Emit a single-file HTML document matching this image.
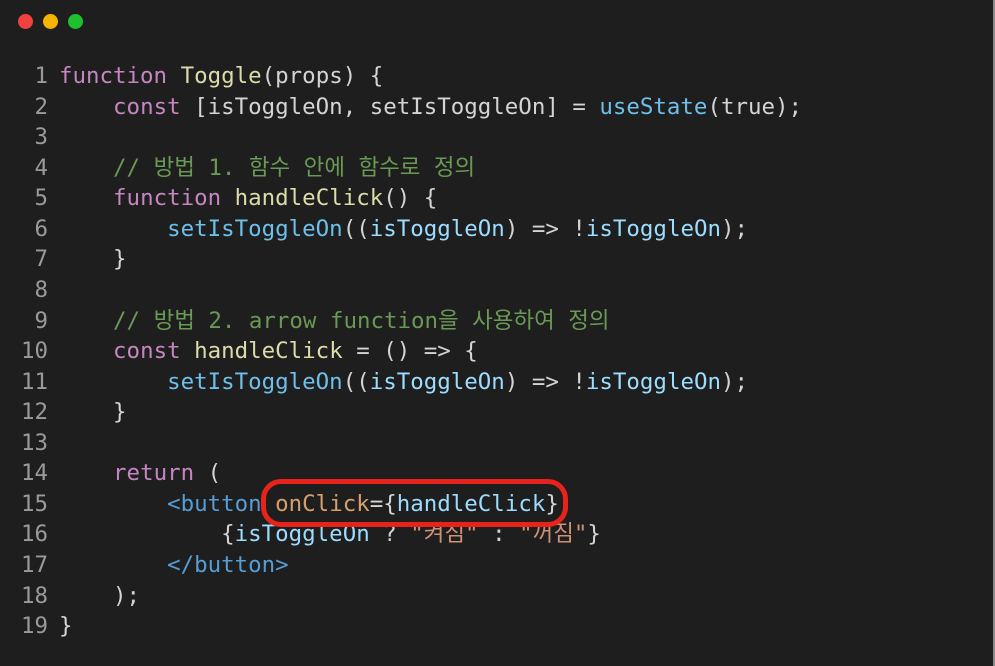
<!DOCTYPE html>
<html><head><meta charset="utf-8"><style>
html,body{margin:0;padding:0;}
body{width:995px;height:666px;background:#1e1e1e;position:relative;overflow:hidden;}
.rb{position:absolute;right:0;top:0;width:2px;height:666px;background:#8a8a8a;}
.dot{position:absolute;top:14px;width:15px;height:15px;border-radius:50%;}
pre{position:absolute;left:0;top:61px;margin:0;font-family:"DejaVu Sans Mono","Noto Sans CJK KR",monospace;font-size:22.45px;line-height:30.56px;color:#d4d4d4;}
.n{display:inline-block;width:48px;text-align:right;color:#9a9a9a;margin-right:11px;}
.k{color:#c586c0}.f{color:#dcdcaa}.v{color:#9cdcfe}.c{color:#6a9955}.t{color:#569cd6}.s{color:#ce9178}.a{color:#d7a06a}.u{color:#6cc0ea}
.ring{position:absolute;left:261px;top:479px;width:297px;height:38px;border:5px solid #e8231b;border-radius:20px;}
</style></head><body>
<div class="rb"></div>
<div class="dot" style="left:18px;background:#f04040"></div>
<div class="dot" style="left:43px;background:#f5b400"></div>
<div class="dot" style="left:68px;background:#1ec02e"></div>
<pre><span class="n">1</span><span class="k">function</span> <span class="f">Toggle</span>(props) {
<span class="n">2</span>    <span class="k">const</span> [isToggleOn, setIsToggleOn] = <span class="u">useState</span>(true);
<span class="n">3</span>
<span class="n">4</span>    <span class="c">// 방법 1. 함수 안에 함수로 정의</span>
<span class="n">5</span>    <span class="k">function</span> <span class="f">handleClick</span>() {
<span class="n">6</span>        <span class="u">setIsToggleOn</span>((<span class="v">isToggleOn</span>) =&gt; !<span class="v">isToggleOn</span>);
<span class="n">7</span>    }
<span class="n">8</span>
<span class="n">9</span>    <span class="c">// 방법 2. arrow function을 사용하여 정의</span>
<span class="n">10</span>    <span class="k">const</span> <span class="f">handleClick</span> = () =&gt; {
<span class="n">11</span>        <span class="u">setIsToggleOn</span>((<span class="v">isToggleOn</span>) =&gt; !<span class="v">isToggleOn</span>);
<span class="n">12</span>    }
<span class="n">13</span>
<span class="n">14</span>    <span class="k">return</span> (
<span class="n">15</span>        <span class="t">&lt;button</span> <span class="a">onClick</span>={<span class="v">handleClick</span>}
<span class="n">16</span>            {<span class="v">isToggleOn</span> ? <span class="s">"켜짐"</span> : <span class="s">"꺼짐"</span>}
<span class="n">17</span>        <span class="t">&lt;/button&gt;</span>
<span class="n">18</span>    );
<span class="n">19</span>}</pre>
<div class="ring"></div>
</body></html>
